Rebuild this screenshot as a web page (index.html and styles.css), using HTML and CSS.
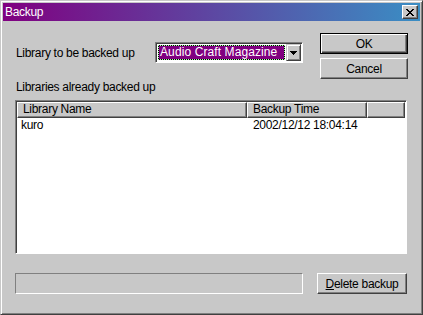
FILE: index.html
```html
<!DOCTYPE html>
<html lang="en">
<head>
    <meta charset="UTF-8">
    <title>Backup</title>
    <link rel="stylesheet" href="styles.css">
</head>
<body>

    <div class="window">
        <div class="titlebar">
            <span class="title">Backup</span>
            <button class="close-btn">
                <svg width="8" height="7" viewBox="0 0 8 7" shape-rendering="crispEdges">
                    <path fill="#000" d="M0 0h2v1H0z M6 0h2v1H6z M1 1h2v1H1z M5 1h2v1H5z M2 2h4v1H2z M3 3h2v1H3z M2 4h4v1H2z M1 5h2v1H1z M5 5h2v1H5z M0 6h2v1H0z M6 6h2v1H6z"/>
                </svg>
            </button>
        </div>

        <div class="content">
            <div class="top">
                <div class="top-left">
                    <div class="field-row">
                        <span class="label">Library to be backed up</span>
                        <div class="combo">
                            <div class="combo-value">Audio Craft Magazine</div>
                            <div class="combo-arrow">
                                <svg width="7" height="4" viewBox="0 0 7 4" shape-rendering="crispEdges">
                                    <path fill="#000" d="M0 0h7v1H0z M1 1h5v1H1z M2 2h3v1H2z M3 3h1v1H3z"/>
                                </svg>
                            </div>
                        </div>
                    </div>
                </div>
                <div class="side-buttons">
                    <button class="btn btn-default">OK</button>
                    <button class="btn">Cancel</button>
                </div>
            </div>

            <div class="label list-label">Libraries already backed up</div>

            <div class="listview">
                <div class="lv-header">
                    <div class="lv-col col-name">Library Name</div>
                    <div class="lv-col col-time">Backup Time</div>
                    <div class="lv-col col-rest"></div>
                </div>
                <div class="lv-row">
                    <div class="col-name">kuro</div>
                    <div class="col-time">2002/12/12 18:04:14</div>
                </div>
            </div>

            <div class="bottom">
                <div class="progress"></div>
                <button class="btn btn-wide"><u>D</u>elete backup</button>
            </div>
        </div>
    </div>

</body>
</html>
```

FILE: styles.css
```css
/* General */
* {
    box-sizing: border-box;
}

body {
    margin: 0;
    background: #c8c8c8;
    font-family: "Liberation Sans", Arial, sans-serif;
    font-size: 12px;
    letter-spacing: -0.3px;
    color: #000;
}

/* Window frame */
.window {
    width: 423px;
    height: 315px;
    background: #c8c8c8;
    border: 1px solid;
    border-color: #c8c8c8 #404040 #404040 #c8c8c8;
    box-shadow: inset 1px 1px #fff, inset -1px -1px #808080;
    padding: 2px;
}

.titlebar {
    height: 18px;
    display: flex;
    align-items: center;
    justify-content: space-between;
    padding: 0 2px;
    background: linear-gradient(to right, #800080, #3a8ec4);
    color: #fff;
}

.close-btn {
    width: 16px;
    height: 14px;
    padding: 0;
    display: flex;
    align-items: center;
    justify-content: center;
    background: #c8c8c8;
    border: 1px solid;
    border-color: #fff #404040 #404040 #fff;
    box-shadow: inset -1px -1px #808080;
}

/* Content */
.content {
    padding: 12px 0 0 12px;
}

.label {
    padding-left: 1px;
    white-space: nowrap;
}

.top {
    display: flex;
    height: 46px;
}

.top-left {
    width: 305px;
    padding-top: 9px;
}

.field-row {
    display: flex;
    align-items: center;
}

.field-row .label {
    width: 140px;
}

/* Combo box */
.combo {
    width: 148px;
    height: 21px;
    display: flex;
    padding: 1px;
    background: #fff;
    border: 1px solid;
    border-color: #808080 #fff #fff #808080;
    box-shadow: inset 1px 1px #404040;
}

.combo-value {
    flex: 1;
    margin: 1px;
    padding-left: 1px;
    line-height: 13px;
    letter-spacing: 0.1px;
    background: #800080;
    color: #fff;
    border: 1px solid #000;
    outline: 1px dotted #a8ffa8;
    outline-offset: -1px;
    white-space: nowrap;
    overflow: hidden;
}

.combo-arrow {
    width: 15px;
    display: flex;
    align-items: center;
    justify-content: center;
    background: #c8c8c8;
    border: 1px solid;
    border-color: #c8c8c8 #404040 #404040 #c8c8c8;
    box-shadow: inset 1px 1px #fff, inset -1px -1px #808080;
}

/* Buttons */
.side-buttons {
    display: flex;
    flex-direction: column;
    gap: 4px;
}

.btn {
    width: 88px;
    height: 21px;
    padding: 0;
    font: inherit;
    letter-spacing: inherit;
    color: #000;
    background: #c8c8c8;
    border: 1px solid;
    border-color: #fff #404040 #404040 #fff;
    box-shadow: inset -1px -1px #808080;
}

.btn-default {
    border-color: #000;
    box-shadow: inset 1px 1px #fff, inset -1px -1px #404040, inset -2px -2px #808080;
}

.btn-wide {
    width: 90px;
}

/* List view */
.list-label {
    height: 14px;
    line-height: 14px;
    margin: 1px 0 6px;
}

.listview {
    width: 392px;
    height: 154px;
    padding: 1px;
    background: #fff;
    border: 1px solid;
    border-color: #808080 #fff #fff #808080;
    box-shadow: inset 1px 1px #404040;
}

.lv-header {
    display: flex;
    height: 16px;
}

.lv-col {
    height: 16px;
    line-height: 13px;
    padding-left: 5px;
    background: #c8c8c8;
    border: 1px solid;
    border-color: #fff #404040 #404040 #fff;
    box-shadow: inset -1px -1px #808080;
    white-space: nowrap;
}

.col-name {
    width: 230px;
}

.col-time {
    width: 120px;
}

.col-rest {
    flex: 1;
}

.lv-row {
    display: flex;
    line-height: 12px;
    padding-top: 1px;
}

.lv-row .col-name {
    padding-left: 4px;
}

.lv-row .col-time {
    padding-left: 6px;
}

/* Bottom row */
.bottom {
    display: flex;
    gap: 14px;
    margin-top: 19px;
}

.progress {
    width: 288px;
    height: 21px;
    border: 1px solid;
    border-color: #808080 #fff #fff #808080;
}
```
